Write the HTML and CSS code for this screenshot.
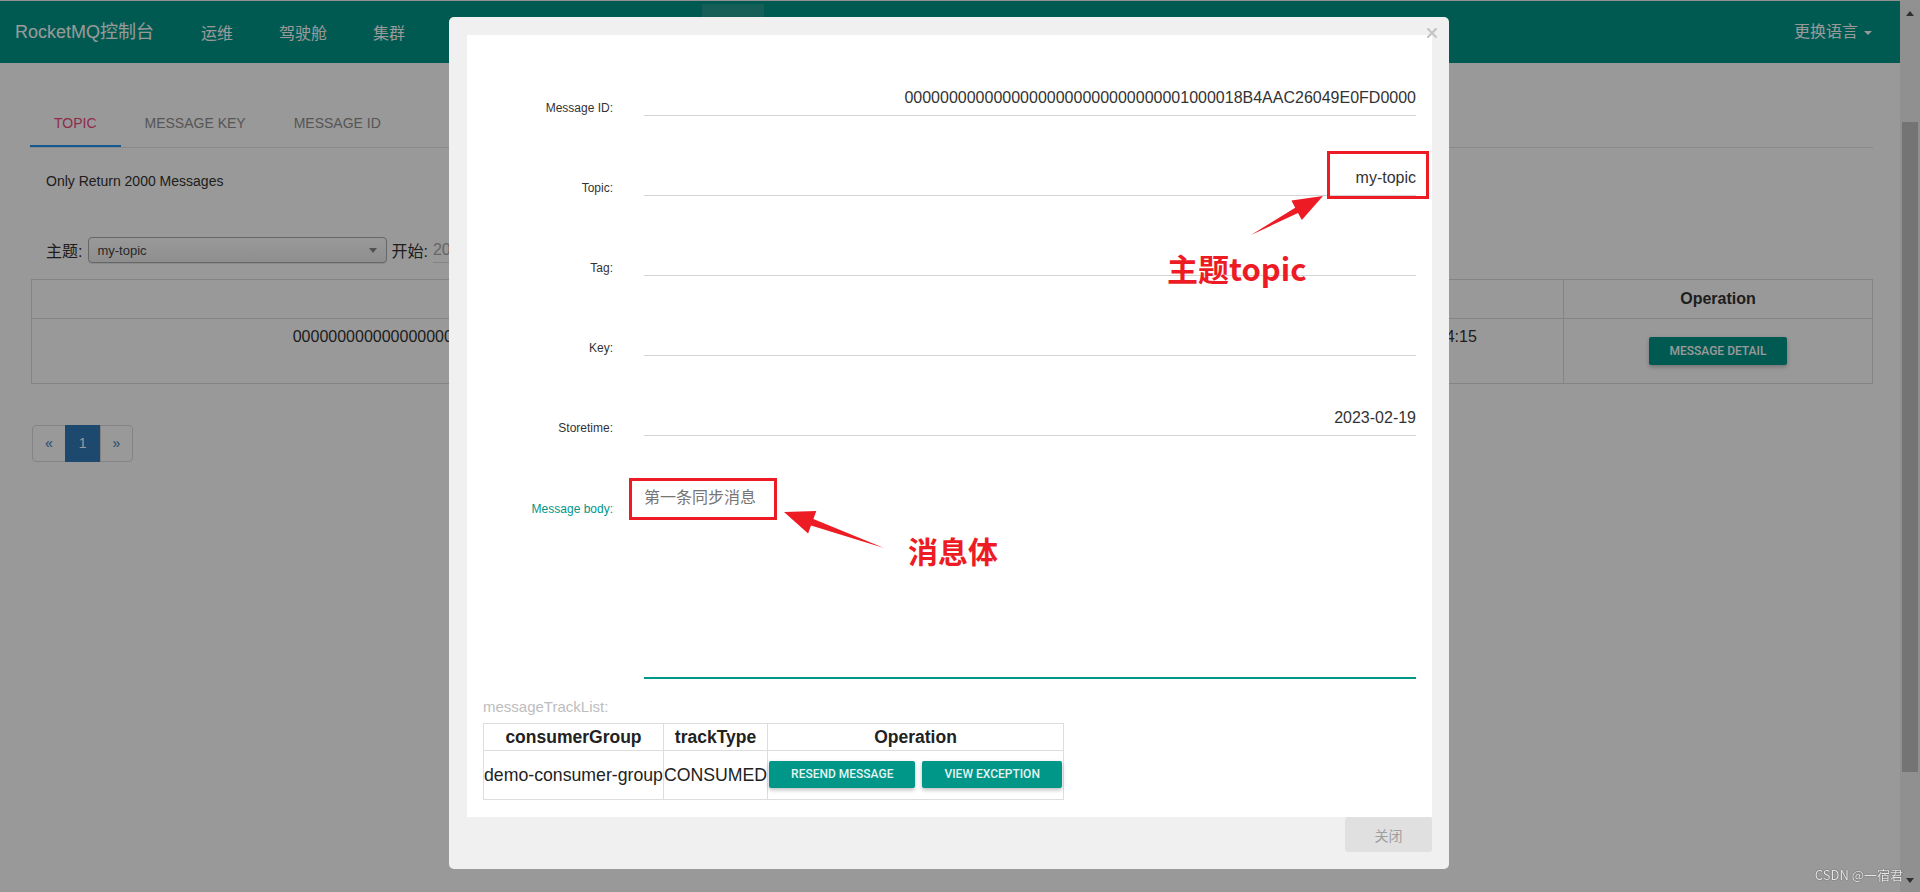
FILE: index.html
```html
<!DOCTYPE html>
<html lang="zh-CN">
<head>
<meta charset="utf-8">
<title>RocketMQ控制台</title>
<link rel="stylesheet" href="styles.css">
</head>
<body>
<div class="app">
  <div class="page">
    <nav class="navbar">
      <div class="brand">RocketMQ控制台</div>
      <ul class="nav">
        <li>运维</li>
        <li>驾驶舱</li>
        <li>集群</li>
        <li>主题</li>
        <li>消费者</li>
        <li>生产者</li>
        <li class="active">消息</li>
        <li>消息轨迹</li>
      </ul>
      <div class="lang">更换语言<span class="caret"></span></div>
    </nav>
    <main class="content">
      <div class="tabs">
        <div class="tab active">TOPIC</div>
        <div class="tab">MESSAGE KEY</div>
        <div class="tab">MESSAGE ID</div>
      </div>
      <p class="hint">Only Return 2000 Messages</p>
      <div class="filter">
        <span class="flabel">主题:</span>
        <div class="select"><span>my-topic</span><span class="sel-arrow"></span></div>
        <span class="flabel">开始:</span>
        <div class="date-input">2023-02-19 00:00:00</div>
      </div>
      <table class="result">
        <colgroup><col class="c-id"><col class="c-tag"><col class="c-key"><col class="c-time"><col class="c-op"></colgroup>
        <thead>
          <tr><th>Message ID</th><th>Tag</th><th>Key</th><th>StoreTime</th><th>Operation</th></tr>
        </thead>
        <tbody>
          <tr>
            <td>00000000000000000000000000000001000018B4AAC26049E0FD0000</td>
            <td></td>
            <td></td>
            <td>2023-02-19 16:34:15</td>
            <td class="op"><button class="btn-teal">MESSAGE DETAIL</button></td>
          </tr>
        </tbody>
      </table>
      <ul class="pagination">
        <li>&laquo;</li>
        <li class="current">1</li>
        <li>&raquo;</li>
      </ul>
    </main>
  </div>
  <div class="scrollbar">
    <div class="sb-btn"><span class="tri-up"></span></div>
    <div class="sb-track"><div class="sb-thumb"></div></div>
    <div class="sb-btn"><span class="tri-down"></span></div>
  </div>
</div>

<div class="backdrop"></div>

<div class="modal">
  <span class="close-x"><svg width="10" height="10" viewBox="0 0 10 10"><path d="M1 1L9 9M9 1L1 9" stroke="#c4c4c4" stroke-width="2.2" stroke-linecap="square"/></svg></span>
  <div class="modal-body">
    <div class="form-row"><label>Message ID:</label><div class="field">00000000000000000000000000000001000018B4AAC26049E0FD0000</div></div>
    <div class="form-row"><label>Topic:</label><div class="field">my-topic</div></div>
    <div class="form-row"><label>Tag:</label><div class="field"></div></div>
    <div class="form-row"><label>Key:</label><div class="field"></div></div>
    <div class="form-row"><label>Storetime:</label><div class="field">2023-02-19</div></div>
    <div class="form-row body-row"><label class="focused">Message body:</label><div class="textarea">第一条同步消息</div></div>
    <div class="track-label">messageTrackList:</div>
    <table class="track">
      <thead>
        <tr><th>consumerGroup</th><th>trackType</th><th>Operation</th></tr>
      </thead>
      <tbody>
        <tr>
          <td>demo-consumer-group</td>
          <td>CONSUMED</td>
          <td><div class="btns"><button class="btn-teal light">RESEND MESSAGE</button><button class="btn-teal light">VIEW EXCEPTION</button></div></td>
        </tr>
      </tbody>
    </table>
  </div>
  <div class="modal-footer"><button class="btn-close">关闭</button></div>
</div>

<svg class="annot" width="1920" height="892" viewBox="0 0 1920 892">
  <rect x="1328.5" y="152.5" width="99" height="45" fill="none" stroke="#ed1c24" stroke-width="3"/>
  <rect x="630.5" y="479.5" width="145" height="39" fill="none" stroke="#ed1c24" stroke-width="3"/>
  <polygon points="1251,235 1295.2,207.7 1291.4,200.6 1323,196 1301.8,220 1298,212.9" fill="#ed1c24"/>
  <polygon points="884,548 813.4,518.9 816.3,510.9 784,512 808.1,533.5 811,525.5" fill="#ed1c24"/>
</svg>
<div class="note note-topic">主题topic</div>
<div class="note note-body">消息体</div>
<div class="watermark">CSDN @一宿君</div>
</body>
</html>
```

FILE: styles.css
```css
* { box-sizing: border-box; margin: 0; padding: 0; }
html, body { height: 100%; }
body {
  font-family: "Liberation Sans", "Noto Sans CJK SC", Arial, sans-serif;
  color: #333;
  background: #fff;
  overflow: hidden;
  border-top: 1px solid #f2f2f2;
}
ul { list-style: none; }
button { font-family: inherit; border: 0; cursor: pointer; }

.app { display: flex; height: 891px; }
.page { flex: 1; min-width: 0; background: #fff; }

/* navbar */
.navbar { height: 62px; background: #009688; color: #fff; display: flex; }
.brand { font-size: 18px; line-height: 62px; padding-left: 15px; white-space: nowrap; }
.nav { display: flex; margin-left: 24px; }
.nav li { font-size: 16px; line-height: 62px; padding: 2px 23px 0; white-space: nowrap; }
.nav li.active { background: #239e93; margin-top: 3px; margin-left: 8px; padding: 0 15px; line-height: 59px; }
.lang { margin-left: auto; margin-right: 28px; font-size: 16px; line-height: 62px; white-space: nowrap; }
.caret { display: inline-block; vertical-align: middle; margin-left: 6px; width: 0; height: 0;
  border-top: 4px solid #fff; border-left: 4px solid transparent; border-right: 4px solid transparent; }

/* content */
.content { padding: 36px 27px 0 30px; }
.tabs { display: flex; height: 49px; border-bottom: 1px solid #e4e4e4; }
.tab { font-size: 14px; line-height: 48px; padding: 0 24px; color: #8f8f8f; }
.tab.active { color: #f04a7e; box-shadow: inset 0 -2px 0 #2196f3; }
.hint { font-size: 14px; line-height: 20px; margin-top: 23px; padding-left: 16px; color: #333; }
.filter { display: flex; align-items: center; height: 26px; margin-top: 46px; padding-left: 16px; }
.flabel { font-size: 16px; color: #333; }
.select { margin-left: 6px; margin-right: 4px; width: 299px; height: 26px; border: 1px solid #aaa; border-radius: 4px;
  background: linear-gradient(#fff, #eee); display: flex; align-items: center; justify-content: space-between;
  padding: 0 9px 0 8px; font-size: 13px; color: #444; box-shadow: 0 1px 1px rgba(0,0,0,.1); }
.sel-arrow { width: 0; height: 0; border-top: 5px solid #888; border-left: 4px solid transparent; border-right: 4px solid transparent; }
.date-input { margin-left: 5px; width: 200px; font-size: 16px; color: #aaa; border-bottom: 1px solid #ddd; line-height: 24px; white-space: nowrap; }

.result { margin: 16px 0 0 1px; width: 1841px; table-layout: fixed; border-collapse: collapse; border: 1px solid #ddd; }
.c-id { width: 1034px; }
.c-tag { width: 88px; }
.c-key { width: 88px; }
.c-time { width: 322px; }
.c-op { width: 309px; }
.result th { font-size: 16px; font-weight: bold; line-height: 22px; padding: 8px; border: 1px solid #ddd; text-align: center; color: #333; }
.result td { font-size: 16px; line-height: 20px; padding: 8px; border: 1px solid #ddd; text-align: center; vertical-align: top; white-space: nowrap; color: #333; }
.result td.op { padding-top: 18px; padding-bottom: 18px; }
.btn-teal { background: #009688; color: #fff; font-family: Roboto, "Liberation Sans", sans-serif; font-weight: 500; font-size: 12px;
  height: 28px; line-height: 28px; padding: 0 21px; border-radius: 2px; box-shadow: 0 2px 4px rgba(0,0,0,.26); white-space: nowrap; }

.pagination { display: flex; margin: 41px 0 0 2px; }
.pagination li { border: 1px solid #ddd; margin-left: -1px; font-size: 14px; line-height: 19px; padding: 8px 12px; color: #337ab7; background: #fff; }
.pagination li:first-child { margin-left: 0; border-radius: 4px 0 0 4px; }
.pagination li:last-child { border-radius: 0 4px 4px 0; }
.pagination li.current { background: #337ab7; border-color: #337ab7; color: #fff; padding: 8px 13px; }

/* scrollbar */
.scrollbar { width: 20px; display: flex; flex-direction: column; background: #f1f1f1; }
.sb-btn { height: 24px; display: flex; align-items: center; justify-content: center; }
.sb-track { flex: 1; position: relative; }
.sb-thumb { margin: 97px 2px 0; height: 650px; background: #c1c1c1; }
.tri-up { width: 0; height: 0; border-bottom: 5px solid #505050; border-left: 4px solid transparent; border-right: 4px solid transparent; }
.tri-down { width: 0; height: 0; border-top: 5px solid #505050; border-left: 4px solid transparent; border-right: 4px solid transparent; }

/* backdrop */
.backdrop { position: fixed; inset: 0; background: rgba(0,0,0,.4); z-index: 5; }

/* modal */
.modal { position: fixed; left: 449px; top: 17px; width: 1000px; height: 852px; background: #f0f0f0; border-radius: 5px;
  padding: 18px 17px 17px 18px; display: flex; flex-direction: column; z-index: 10; }
.close-x { position: absolute; top: 11px; right: 12px; width: 10px; height: 10px; display: block; line-height: 0; }
.modal-body { background: #fff; padding: 1px 16px 17px 16px; }
.form-row { display: flex; align-items: flex-end; height: 80px; }
.form-row label { width: 130px; margin-right: 31px; text-align: right; font-size: 12px; line-height: 14px; padding-bottom: 1px; color: #333; }
.form-row label.focused { color: #009688; }
.field { flex: 1; height: 28px; border-bottom: 1px solid #d4d4d4; text-align: right; font-size: 16px; line-height: 20px; padding-bottom: 8px; color: #333; white-space: nowrap; }
.body-row { height: auto; align-items: flex-start; margin-top: 44px; }
.body-row label { margin-top: 22px; padding-bottom: 0; }
.textarea { flex: 1; height: 199px; border-bottom: 2px solid #009688; padding-top: 8px; font-size: 16px; line-height: 20px; color: #757575; }
.track-label { margin-top: 19px; font-size: 15px; line-height: 18px; color: #bdbdbd; }
.track { margin-top: 7px; border-collapse: collapse; border: 1px solid #ddd; }
.track th { font-size: 17.5px; font-weight: bold; line-height: 20px; padding: 3px 1px; border: 1px solid #ddd; text-align: center; color: #222; white-space: nowrap; }
.track td { font-size: 17.7px; line-height: 20px; padding: 0 0; border: 1px solid #ddd; vertical-align: middle; color: #222; white-space: nowrap; }
.btns { display: flex; gap: 7px; padding: 10px 1px 11px 1px; }
.btns .btn-teal { height: 27px; line-height: 27px; padding: 0 22px; color: #e3f4f2; }
.modal-footer { display: flex; justify-content: flex-end; }
.btn-close { width: 87px; height: 35px; background: #e0e0e0; color: #9e9e9e; font-size: 14px; border-radius: 3px; font-family: "Noto Sans CJK SC", sans-serif; }

/* annotations */
.annot { position: fixed; left: 0; top: 0; z-index: 20; pointer-events: none; }
.note { position: fixed; z-index: 21; color: #ed1c24; font-weight: 700; font-family: "Noto Sans CJK SC", sans-serif; line-height: 1; white-space: nowrap; }
.note-topic { left: 1167px; top: 252px; font-size: 31px; }
.note-body { left: 908px; top: 535px; font-size: 30px; }
.watermark { position: fixed; right: 17px; bottom: 8px; z-index: 30; font-size: 13px; color: #e6e6e6;
  font-family: "Noto Sans CJK SC", sans-serif; text-shadow: 0 0 1px #555, 0 0 1px #555; }
```
